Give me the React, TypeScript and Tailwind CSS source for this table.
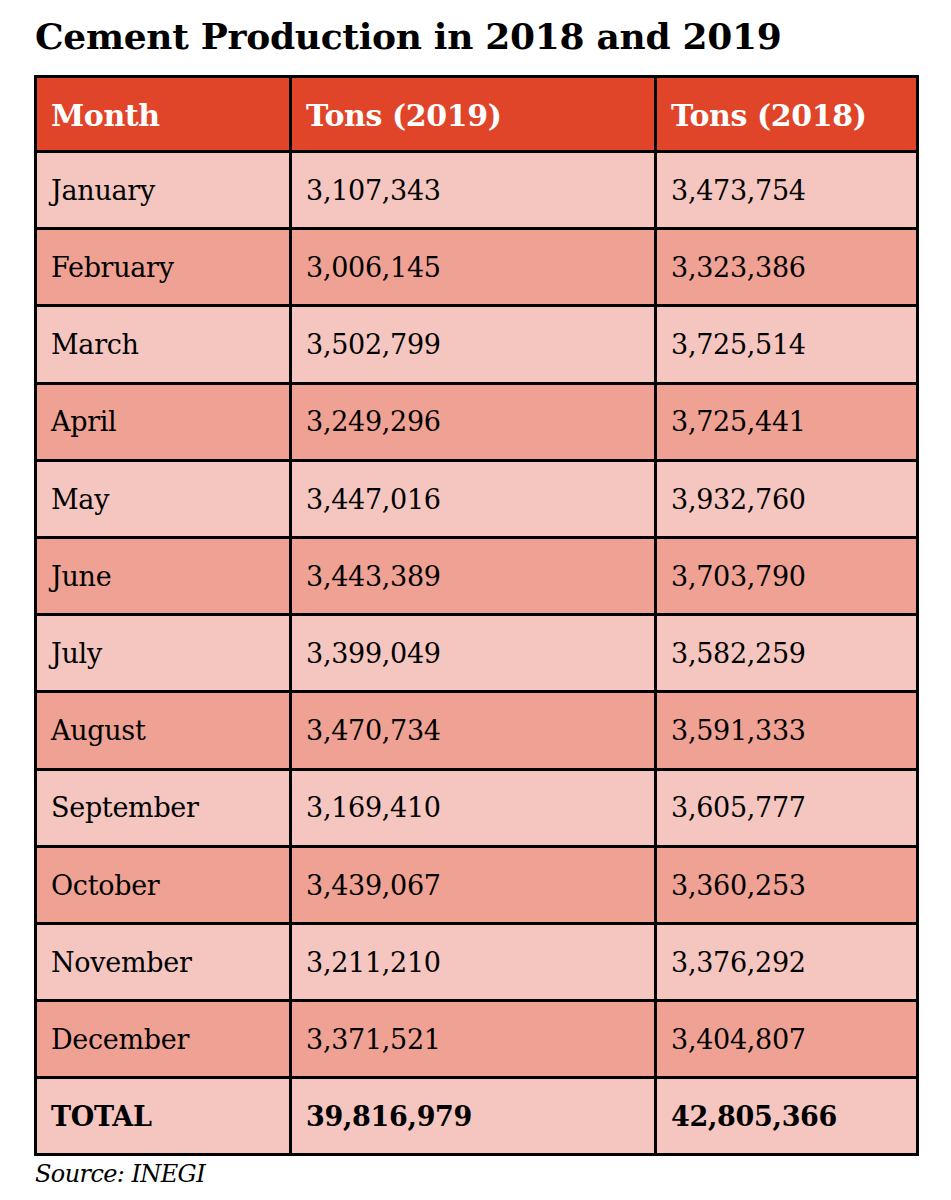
const ROWS: [string, string, string][] = [
  ['January', '3,107,343', '3,473,754'],
  ['February', '3,006,145', '3,323,386'],
  ['March', '3,502,799', '3,725,514'],
  ['April', '3,249,296', '3,725,441'],
  ['May', '3,447,016', '3,932,760'],
  ['June', '3,443,389', '3,703,790'],
  ['July', '3,399,049', '3,582,259'],
  ['August', '3,470,734', '3,591,333'],
  ['September', '3,169,410', '3,605,777'],
  ['October', '3,439,067', '3,360,253'],
  ['November', '3,211,210', '3,376,292'],
  ['December', '3,371,521', '3,404,807'],
]

export default function App() {
  return (
    <div className="w-[951px] h-[1200px] bg-white pl-[34px] pt-[14px] text-black font-['DejaVu_Serif',serif]">
      <h1 className="text-[36px] leading-[44px] font-bold tracking-[-0.3px] pl-[1px] mb-[17px]">
        Cement Production in 2018 and 2019
      </h1>

      <table className="border-collapse border-[3px] border-black text-[27px] tracking-[-0.3px]">
        <colgroup>
          <col className="w-[255px]" />
          <col className="w-[365px]" />
          <col className="w-[262px]" />
        </colgroup>
        <thead>
          <tr className="h-[75px] bg-[#e04429] text-white text-[30px] tracking-[-0.4px]">
            <th className="border-[3px] border-black px-[14px] pt-[3px] text-left font-bold">Month</th>
            <th className="border-[3px] border-black px-[14px] pt-[3px] text-left font-bold">Tons (2019)</th>
            <th className="border-[3px] border-black px-[14px] pt-[3px] text-left font-bold">Tons (2018)</th>
          </tr>
        </thead>
        <tbody>
          {ROWS.map((r, i) => (
            <tr key={r[0]} className={`h-[77.2px] ${i % 2 === 0 ? 'bg-[#f5c6bf]' : 'bg-[#efa294]'}`}>
              <td className="border-[3px] border-black px-[14px] pt-[2px]">{r[0]}</td>
              <td className="border-[3px] border-black px-[14px] pt-[2px]">{r[1]}</td>
              <td className="border-[3px] border-black px-[14px] pt-[2px]">{r[2]}</td>
            </tr>
          ))}
          <tr className="h-[77.2px] bg-[#f5c6bf] font-bold">
            <td className="border-[3px] border-black px-[14px] pt-[2px]">TOTAL</td>
            <td className="border-[3px] border-black px-[14px] pt-[2px]">39,816,979</td>
            <td className="border-[3px] border-black px-[14px] pt-[2px]">42,805,366</td>
          </tr>
        </tbody>
      </table>

      <p className="italic text-[24px] leading-[36px] tracking-[-0.6px] pl-[1px]">Source: INEGI</p>
    </div>
  )
}
